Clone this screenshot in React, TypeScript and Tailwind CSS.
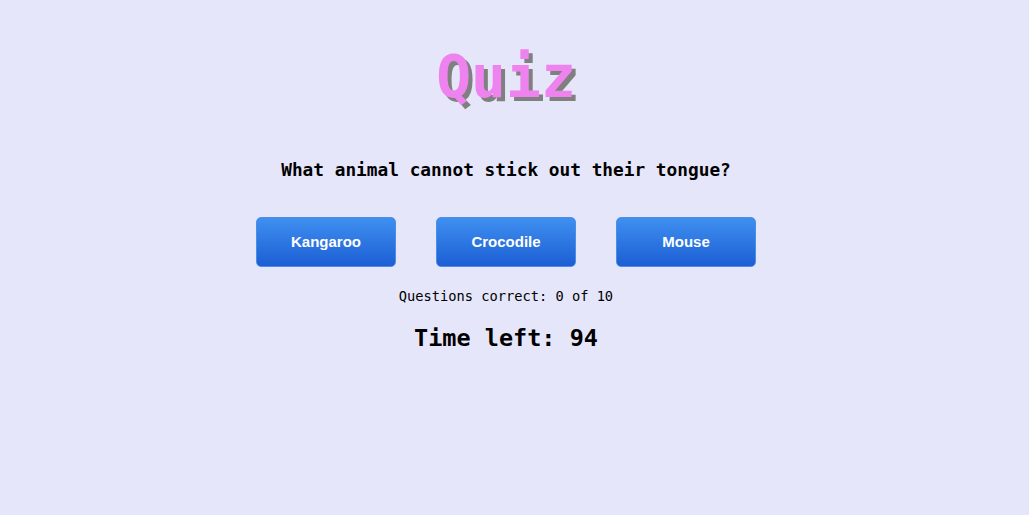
export default function App() {
  const mono = { fontFamily: '"DejaVu Sans Mono", "Liberation Mono", monospace' };
  return (
    <div className="min-h-[515px] w-full bg-[#e6e6fa]">
      <div className="flex flex-col items-center pr-[17px] pt-[41px]" style={mono}>
        <h1 className="text-[58px] font-bold leading-[72px] text-[#ee82ee] [text-shadow:4px_4px_0_#808080]">
          Quiz
        </h1>
        <p className="mt-[45px] text-[17.8px] font-bold leading-[24px] text-black">
          What animal cannot stick out their tongue?
        </p>
        <div className="mt-[35px] flex gap-[40px]">
          {["Kangaroo", "Crocodile", "Mouse"].map((t) => (
            <button
              key={t}
              className="h-[50px] w-[140px] rounded-[5px] border border-[#4a8ee8] bg-gradient-to-b from-[#3f8ff0] to-[#1d5ed4] text-[15px] font-bold text-white"
              style={{ fontFamily: '"Liberation Sans", Arial, sans-serif' }}
            >
              {t}
            </button>
          ))}
        </div>
        <p className="mt-[20px] text-[13.7px] leading-[18px] text-black">Questions correct: 0 of 10</p>
        <p className="mt-[18px] text-[23.5px] font-bold leading-[30px] text-black">Time left: 94</p>
      </div>
    </div>
  );
}
